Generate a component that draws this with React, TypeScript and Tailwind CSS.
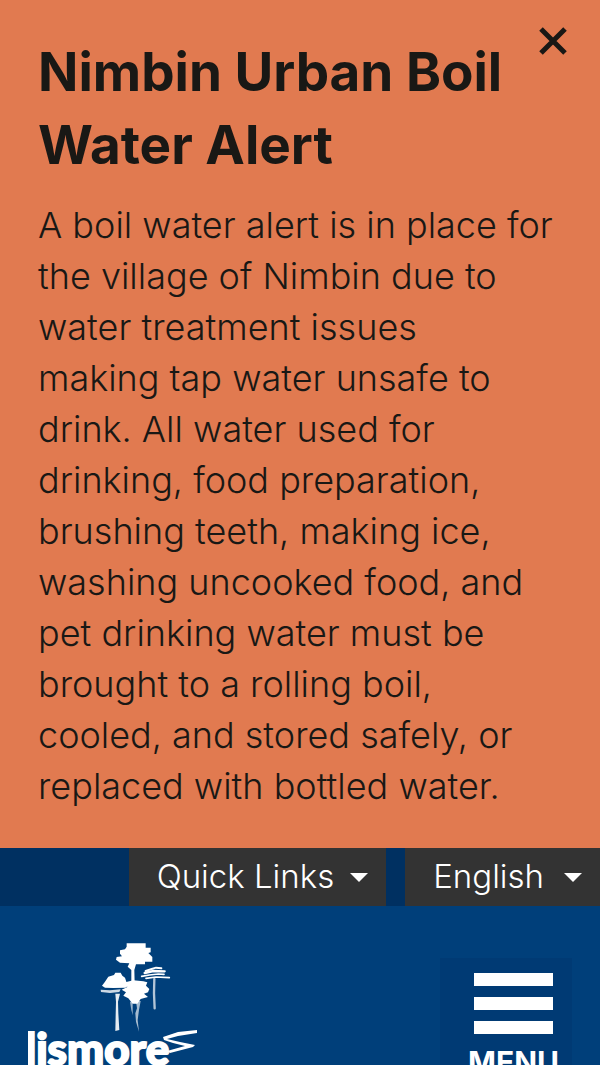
import { useState } from "react";

function Logo() {
  return (
    <svg
      viewBox="0 0 172 140"
      className="h-[140px] w-[172px]"
      fill="#ffffff"
      role="img"
      aria-label="Lismore"
    >
      <g transform="translate(62 -8) scale(0.3333)">
        {/* tall tree */}
        <path d="M110 25L167 25L167 38L182 38L182 52L175 54L187 66L187 80L165 80L165 88L138 88L133 105L134 145L124 145L124 105L113 95L118 85L90 83L78 74L80 66L96 64L90 56L90 46L105 43L110 35Z" />
        {/* left tree */}
        <path d="M45 140L55 125L72 120L76 113L92 113L97 122L105 128L110 143L122 148L106 158L70 159L45 158L36 152Z" />
        <path d="M32 164L60 166L92 163L88 171L60 174L33 171Z" opacity="0.8" />
        <path
          d="M76 176L90 176L84 200L85 235L88 285L76 288L77 240L78 200Z"
          opacity="0.9"
        />
        {/* centre tree */}
        <path d="M106 142L130 136L160 139L172 142L168 152L178 162L174 172L162 176L174 186L152 192L142 206L128 206L115 190L100 182L108 172L95 164L112 156Z" />
        <path d="M120 200L128 200L128 240L124 225Z" opacity="0.6" />
        <path
          d="M138 198L152 198L147 225L143 255L147 290L138 260L136 235L141 220Z"
          opacity="0.65"
        />
        {/* right tree */}
        <g fill="none" stroke="#ffffff" strokeLinecap="round">
          <path d="M167 108L185 102L198 98L214 100" strokeWidth="6" />
          <path d="M164 114L190 108L224 109" strokeWidth="7" />
          <path d="M155 124L178 120L205 117L222 118" strokeWidth="5" />
          <path d="M168 130L198 126L238 128" strokeWidth="5" />
          <path d="M193 132L192 175L194 220" strokeWidth="7" opacity="0.7" />
        </g>
      </g>
      {/* river */}
      <path d="M169 87L169 90L150 93L139 96L152 99L167 102L165 104L142 110L139 108L157 103L145 100L136 97L135 94L150 89Z" />
      <text
        x="-3"
        y="122"
        fontFamily="Lato, 'Liberation Sans', sans-serif"
        fontSize="44"
        fontWeight="900"
        stroke="#ffffff"
        strokeWidth="2"
      >
        lismore
      </text>
    </svg>
  );
}

function Caret() {
  return (
    <svg viewBox="0 0 18 9" className="h-[9px] w-[18px]" fill="currentColor">
      <path d="M0 0h18L9 9z" />
    </svg>
  );
}

export default function App() {
  const [alertOpen, setAlertOpen] = useState(true);

  return (
    <div className="flex h-screen flex-col overflow-hidden bg-[#003f7a] font-['Inter','Liberation_Sans',sans-serif]">
      {alertOpen && (
        <section className="relative shrink-0 bg-[#e17a50] px-[38px] pt-9 pb-9 text-[#191815]">
          <button
            type="button"
            aria-label="Close alert"
            onClick={() => setAlertOpen(false)}
            className="absolute top-[27px] right-[33px]"
          >
            <svg
              viewBox="0 0 28 28"
              className="size-7"
              stroke="currentColor"
              strokeWidth="5"
            >
              <path d="M2 2l24 24M26 2L2 26" />
            </svg>
          </button>
          <h1 className="pr-12 text-[53px] leading-[73px] font-bold">
            Nimbin Urban Boil Water Alert
          </h1>
          <p className="mt-[18px] text-[36px] leading-[51px] font-light">
            A boil water alert is in place for the village of Nimbin due to
            water treatment issues
            <br />
            making tap water unsafe to drink. All water used for drinking, food
            preparation, brushing teeth, making ice, washing uncooked food, and
            pet drinking water must be brought to a rolling boil,
            <br />
            cooled, and stored safely, or replaced with bottled water.
          </p>
        </section>
      )}

      <nav className="flex h-[58px] shrink-0 justify-end gap-[19px] bg-[#003061] text-[33px] font-light text-white">
        <button
          type="button"
          className="flex items-center gap-4 bg-[#333333] pr-[18px] pl-7"
        >
          Quick Links
          <Caret />
        </button>
        <button
          type="button"
          className="flex items-center gap-5 bg-[#333333] pr-[18px] pl-7"
        >
          English
          <Caret />
        </button>
      </nav>

      <header className="flex shrink-0 items-start justify-between px-7">
        <a href="#" className="mt-[37px]">
          <Logo />
        </a>
        <button
          type="button"
          className="mt-[52px] flex w-[132px] flex-col items-center bg-[#003a74] pt-[15px] pr-[19px] pb-5 pl-[34px] text-white"
        >
          <span className="flex w-full flex-col gap-[11px]">
            <span className="h-[13px] bg-white" />
            <span className="h-[13px] bg-white" />
            <span className="h-[13px] bg-white" />
          </span>
          <span className="mt-[10px] text-[30px] leading-9 font-bold">
            MENU
          </span>
        </button>
      </header>
    </div>
  );
}
